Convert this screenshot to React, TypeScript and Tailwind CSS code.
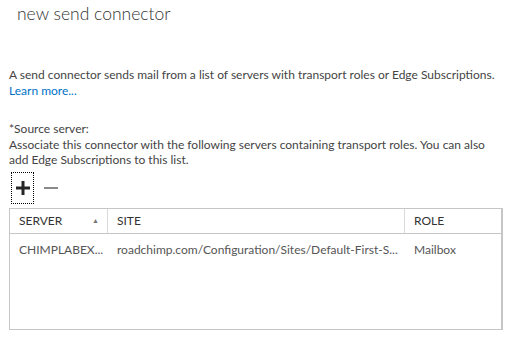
import { ReactNode } from "react";

interface Column {
  label: string;
  width: string;
  sorted?: boolean;
}

const columns: Column[] = [
  { label: "SERVER", width: "w-[98px]", sorted: true },
  { label: "SITE", width: "w-[297px]" },
  { label: "ROLE", width: "flex-1" },
];

const rows = [
  {
    server: "CHIMPLABEX...",
    site: "roadchimp.com/Configuration/Sites/Default-First-S...",
    role: "Mailbox",
  },
];

const Cell = ({ width, children }: { width: string; children: ReactNode }) => (
  <div className={`${width} flex items-center overflow-hidden whitespace-nowrap pl-[9px] pr-[6px]`}>
    {children}
  </div>
);

const PlusIcon = () => (
  <svg width="14" height="14" viewBox="0 0 14 14">
    <rect x="5.5" y="0" width="3" height="14" fill="#262626" />
    <rect x="0" y="5.5" width="14" height="3" fill="#262626" />
  </svg>
);

const MinusIcon = () => (
  <svg width="14" height="14" viewBox="0 0 14 14">
    <rect x="0" y="6" width="14" height="2" fill="#8a8a8a" />
  </svg>
);

export default function App() {
  return (
    <div className="h-[342px] w-[520px] overflow-hidden bg-white font-['Segoe_UI','Lato',sans-serif] text-[#444]">
      <h1 className="pl-[17px] pt-[1px] text-[17.5px] font-light leading-[26px] text-[#333]">
        new send connector
      </h1>

      <p className="mt-[40px] pl-[9px] text-[12px] leading-[16px]">
        A send connector sends mail from a list of servers with transport roles or Edge Subscriptions.
        <br />
        <a className="text-[#0072c6]">Learn more...</a>
      </p>

      <div className="mt-[22px] pl-[9px] text-[12px] leading-[15.5px]">
        <div>*Source server:</div>
        <div className="w-[490px]">
          Associate this connector with the following servers containing transport roles. You can also add Edge
          Subscriptions to this list.
        </div>
      </div>

      <div className="mt-[4px] flex items-center gap-[10px] pl-[11px]">
        <button className="flex h-[32px] w-[23px] items-center justify-center border border-dotted border-black">
          <PlusIcon />
        </button>
        <button className="flex h-[32px] w-[14px] items-center justify-center">
          <MinusIcon />
        </button>
      </div>

      <div className="ml-[9px] mt-[4px] flex h-[122px] w-[494px] flex-col border border-r-2 border-[#c6c6c6] text-[12px]">
        <div className="flex h-[25px] border-b border-[#c6c6c6] text-[#333]">
          {columns.map((col, i) => (
            <div
              key={col.label}
              className={`${col.width} flex items-center justify-between pl-[9px] pr-[8px] ${
                i < columns.length - 1 ? "border-r border-[#dadada]" : ""
              }`}
            >
              <span>{col.label}</span>
              {col.sorted && <span className="text-[7px] text-[#777]">▲</span>}
            </div>
          ))}
        </div>
        {rows.map((row) => (
          <div key={row.server} className="flex h-[33px] text-[#555]">
            <Cell width="w-[98px]">{row.server}</Cell>
            <Cell width="w-[297px]">{row.site}</Cell>
            <Cell width="flex-1">{row.role}</Cell>
          </div>
        ))}
      </div>
    </div>
  );
}
